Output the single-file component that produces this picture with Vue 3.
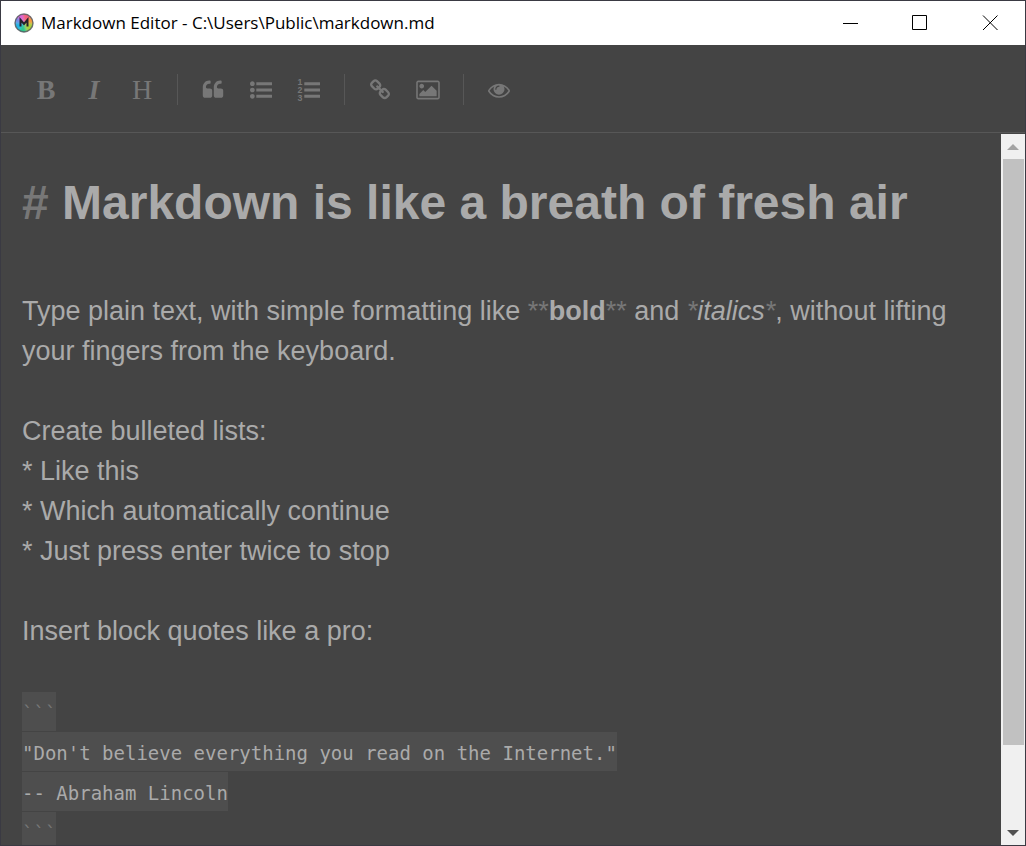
<script setup>
const icons = {
  quote: 'M832 960v384q0 80-56 136t-136 56h-384q-80 0-136-56t-56-136v-704q0-104 40.5-198.5t109.5-163.5 163.5-109.5 198.5-40.5h64q26 0 45 19t19 45v128q0 26-19 45t-45 19h-64q-106 0-181 75t-75 181v32q0 40 28 68t68 28h224q80 0 136 56t56 136zm896 0v384q0 80-56 136t-136 56h-384q-80 0-136-56t-56-136v-704q0-104 40.5-198.5t109.5-163.5 163.5-109.5 198.5-40.5h64q26 0 45 19t19 45v128q0 26-19 45t-45 19h-64q-106 0-181 75t-75 181v32q0 40 28 68t68 28h224q80 0 136 56t56 136z',
  bullets: 'M384 1408q0 80-56 136t-136 56-136-56-56-136 56-136 136-56 136 56 56 136zm0-512q0 80-56 136t-136 56-136-56-56-136 56-136 136-56 136 56 56 136zm1408 416v192q0 13-9.5 22.5t-22.5 9.5h-1216q-13 0-22.5-9.5t-9.5-22.5v-192q0-13 9.5-22.5t22.5-9.5h1216q13 0 22.5 9.5t9.5 22.5zm-1408-928q0 80-56 136t-136 56-136-56-56-136 56-136 136-56 136 56 56 136zm1408 416v192q0 13-9.5 22.5t-22.5 9.5h-1216q-13 0-22.5-9.5t-9.5-22.5v-192q0-13 9.5-22.5t22.5-9.5h1216q13 0 22.5 9.5t9.5 22.5zm0-512v192q0 13-9.5 22.5t-22.5 9.5h-1216q-13 0-22.5-9.5t-9.5-22.5v-192q0-13 9.5-22.5t22.5-9.5h1216q13 0 22.5 9.5t9.5 22.5z',
  bars: 'M1792 1312v192q0 13-9.5 22.5t-22.5 9.5h-1216q-13 0-22.5-9.5t-9.5-22.5v-192q0-13 9.5-22.5t22.5-9.5h1216q13 0 22.5 9.5t9.5 22.5zm0-512v192q0 13-9.5 22.5t-22.5 9.5h-1216q-13 0-22.5-9.5t-9.5-22.5v-192q0-13 9.5-22.5t22.5-9.5h1216q13 0 22.5 9.5t9.5 22.5zm0-512v192q0 13-9.5 22.5t-22.5 9.5h-1216q-13 0-22.5-9.5t-9.5-22.5v-192q0-13 9.5-22.5t22.5-9.5h1216q13 0 22.5 9.5t9.5 22.5z',
  link: 'M1520 1216q0-40-28-68l-208-208q-28-28-68-28-42 0-72 32 3 3 19 18.5t21.5 21.5 15 19 13 25.5 3.5 27.5q0 40-28 68t-68 28q-15 0-27.5-3.5t-25.5-13-19-15-21.5-21.5-18.5-19q-33 31-33 73 0 40 28 68l206 207q27 27 68 27 40 0 68-26l147-146q28-28 28-67zm-703-705q0-40-28-68l-206-207q-28-28-68-28-39 0-68 27l-147 146q-28 28-28 67 0 40 28 68l208 208q27 27 68 27 42 0 72-31-3-3-19-18.5t-21.5-21.5-15-19-13-25.5-3.5-27.5q0-40 28-68t68-28q15 0 27.5 3.5t25.5 13 19 15 21.5 21.5 18.5 19q33-31 33-73zm895 705q0 120-85 203l-147 146q-83 83-203 83-121 0-204-85l-206-207q-83-83-83-203 0-123 88-209l-88-88q-86 88-208 88-120 0-204-84l-208-208q-84-84-84-204t85-203l147-146q83-83 203-83 121 0 204 85l206 207q83 83 83 203 0 123-88 209l88 88q86-88 208-88 120 0 204 84l208 208q84 84 84 204z',
  image: 'M640 576q0 80-56 136t-136 56-136-56-56-136 56-136 136-56 136 56 56 136zm1024 384v448h-1408v-192l320-320 160 160 512-512zm96-704h-1600q-13 0-22.5 9.5t-9.5 22.5v1216q0 13 9.5 22.5t22.5 9.5h1600q13 0 22.5-9.5t9.5-22.5v-1216q0-13-9.5-22.5t-22.5-9.5zm160 32v1216q0 66-47 113t-113 47h-1600q-66 0-113-47t-47-113v-1216q0-66 47-113t113-47h1600q66 0 113 47t47 113z',
  eye: 'M1664 960q-152-236-381-353 61 104 61 225 0 185-131.5 316.5t-316.5 131.5-316.5-131.5-131.5-316.5q0-121 61-225-229 117-381 353 133 205 333.5 326.5t434.5 121.5 434.5-121.5 333.5-326.5zm-720-384q0-20-14-34t-34-14q-125 0-214.5 89.5t-89.5 214.5q0 20 14 34t34 14 34-14 14-34q0-86 61-147t147-61q20 0 34-14t14-34zm848 384q0 34-20 69-140 230-376.5 368.5t-499.5 138.5-499.5-139-376.5-368q-20-35-20-69t20-69q140-229 376.5-368t499.5-139 499.5 139 376.5 368q20 35 20 69z'
}
</script>

<template>
  <div class="window">
    <header class="titlebar">
      <svg class="logo" viewBox="0 0 20 20" aria-hidden="true">
        <defs>
          <clipPath id="disc"><circle cx="10" cy="10" r="9" /></clipPath>
          <filter id="soft"><feGaussianBlur stdDeviation="1.2" /></filter>
        </defs>
        <g clip-path="url(#disc)">
          <g filter="url(#soft)">
            <path d="M10 10L-4-1L8-6Z" fill="#d765d8" />
            <path d="M10 10L8-6L24-2Z" fill="#f0607c" />
            <path d="M10 10L24-2L26 11Z" fill="#f59a3c" />
            <path d="M10 10L26 11L15 26Z" fill="#a9d03e" />
            <path d="M10 10L15 26L0 24Z" fill="#2cc88c" />
            <path d="M10 10L0 24L-6 9Z" fill="#20b4e4" />
            <path d="M10 10L-6 9L-4-1Z" fill="#6f86e6" />
          </g>
        </g>
        <circle cx="10" cy="10" r="9" fill="none" stroke="#4f5358" stroke-opacity=".8" stroke-width="1.4" />
        <path d="M6.5 13.5V6.8L10 11L13.5 6.8V13.5" fill="none" stroke="#25222c" stroke-width="2" />
      </svg>
      <h1 class="title">Markdown Editor - C:\Users\Public\markdown.md</h1>
      <button class="control" type="button" aria-label="Minimize">
        <svg viewBox="0 0 16 16"><path d="M1 8.5H16" /></svg>
      </button>
      <button class="control" type="button" aria-label="Maximize">
        <svg viewBox="0 0 16 16"><path d="M.5 .5H14.5V14.5H.5Z" /></svg>
      </button>
      <button class="control" type="button" aria-label="Close">
        <svg viewBox="0 0 16 16"><path d="M1 .5L15.5 15M15.5 .5L1 15" /></svg>
      </button>
    </header>

    <nav class="toolbar" aria-label="Formatting">
      <button class="tool letter" type="button" aria-label="Bold">B</button>
      <button class="tool letter slanted" type="button" aria-label="Italic">I</button>
      <button class="tool letter light" type="button" aria-label="Heading">H</button>
      <span class="divider"></span>
      <button class="tool" type="button" aria-label="Quote">
        <svg class="icon" viewBox="0 0 1792 1792"><path :d="icons.quote" /></svg>
      </button>
      <button class="tool" type="button" aria-label="Bulleted list">
        <svg class="icon" viewBox="0 0 1792 1792"><path :d="icons.bullets" /></svg>
      </button>
      <button class="tool" type="button" aria-label="Numbered list">
        <svg class="icon" viewBox="0 0 1792 1792">
          <path :d="icons.bars" />
          <g class="digits">
            <text x="-40" y="500">1</text>
            <text x="-40" y="1130">2</text>
            <text x="-40" y="1760">3</text>
          </g>
        </svg>
      </button>
      <span class="divider"></span>
      <button class="tool" type="button" aria-label="Link">
        <svg class="icon" viewBox="0 0 1792 1792"><path :d="icons.link" /></svg>
      </button>
      <button class="tool" type="button" aria-label="Image">
        <svg class="icon wide" viewBox="0 0 1920 1792"><path :d="icons.image" /></svg>
      </button>
      <span class="divider"></span>
      <button class="tool" type="button" aria-label="Preview">
        <svg class="icon" viewBox="0 0 1792 1792"><path :d="icons.eye" /></svg>
      </button>
    </nav>

    <main class="workspace">
      <div class="editor" role="textbox" aria-multiline="true" aria-label="Markdown source" contenteditable="true" spellcheck="false">
        <h2 class="heading"><span class="mark">#</span> Markdown is like a breath of fresh air</h2>
        <p>Type plain text, with simple formatting like <span class="mark">**</span><strong>bold</strong><span class="mark">**</span> and <em><span class="mark">*</span>italics<span class="mark">*</span></em>, without lifting your fingers from the keyboard.</p>
        <p>Create bulleted lists:<br>* Like this<br>* Which automatically continue<br>* Just press enter twice to stop</p>
        <p>Insert block quotes like a pro:</p>
        <div class="block">
          <code class="mark">```</code>
          <code>"Don't believe everything you read on the Internet."</code>
          <code>-- Abraham Lincoln</code>
          <code class="mark">```</code>
        </div>
      </div>
      <div class="scrollbar">
        <button class="arrow" type="button" aria-label="Scroll up">
          <svg viewBox="0 0 12 6"><path d="M0 6L6 0L12 6Z" fill="#a3a3a3" /></svg>
        </button>
        <div class="track"><div class="thumb"></div></div>
        <button class="arrow" type="button" aria-label="Scroll down">
          <svg viewBox="0 0 12 6"><path d="M0 0L6 6L12 0Z" fill="#505050" /></svg>
        </button>
      </div>
    </main>
  </div>
</template>

<style>
body {
  margin: 0;
  background: #444;
}
</style>

<style scoped>
.window {
  display: flex;
  flex-direction: column;
  box-sizing: border-box;
  height: 100vh;
  border: 1px solid #3a3a43;
  background: #444;
  color: #aaa;
  font-family: "Liberation Sans", Arial, sans-serif;
  overflow: hidden;
}
button {
  display: flex;
  align-items: center;
  justify-content: center;
  margin: 0;
  padding: 0;
  border: 0;
  background: none;
  color: inherit;
}
.titlebar {
  display: flex;
  flex: none;
  align-items: center;
  height: 44px;
  padding-left: 13px;
  background: #fff;
  color: #000;
}
.logo {
  width: 20px;
  height: 20px;
}
.title {
  flex: 1;
  margin: 0 0 0 7px;
  font: 400 17px/24px "Open Sans", "Noto Sans", sans-serif;
  white-space: nowrap;
}
.control {
  width: 70px;
  height: 44px;
}
.control svg {
  width: 16px;
  height: 16px;
  fill: none;
  stroke: #000;
  stroke-width: 1;
}
.toolbar {
  display: flex;
  flex: none;
  align-items: center;
  padding: 29px 21px 27px;
  border-bottom: 1px solid #575757;
  color: #777;
}
.tool {
  width: 48px;
  height: 31px;
}
.letter {
  font: 700 28px/31px "Liberation Serif", "Times New Roman", serif;
}
.slanted {
  font-style: italic;
}
.light {
  font-weight: 400;
}
.divider {
  width: 1px;
  height: 31px;
  margin: 0 11px;
  background: #575757;
}
.icon {
  width: 22px;
  height: 22px;
  fill: currentColor;
  overflow: visible;
}
.wide {
  width: 24px;
}
.digits {
  font: 700 720px "Liberation Sans", Arial, sans-serif;
}
.workspace {
  display: flex;
  flex: 1;
  min-height: 0;
  margin-top: 1px;
}
.editor {
  flex: 1;
  min-width: 0;
  padding: 33px 21px 0;
  font-size: 27px;
  line-height: 40px;
  overflow: hidden;
  outline: none;
}
.heading {
  margin: 0 0 52px;
  font-size: 48px;
  line-height: 72px;
}
.editor p {
  margin: 0 0 40px;
}
.mark {
  color: #777;
}
.block {
  display: flex;
  flex-direction: column;
  align-items: flex-start;
  gap: 1px;
  padding-top: 1px;
}
.block code {
  height: 39px;
  background: #4e4e4e;
  font: 19px/43px "DejaVu Sans Mono", monospace;
  white-space: pre;
}
.scrollbar {
  display: flex;
  flex: none;
  flex-direction: column;
  width: 24px;
  background: #f0f0f0;
}
.arrow {
  flex: none;
  height: 25px;
}
.arrow svg {
  width: 12px;
  height: 6px;
}
.track {
  flex: 1;
  padding: 0 1px 0 2px;
}
.thumb {
  height: 88.7%;
  background: #c1c1c1;
}
</style>
